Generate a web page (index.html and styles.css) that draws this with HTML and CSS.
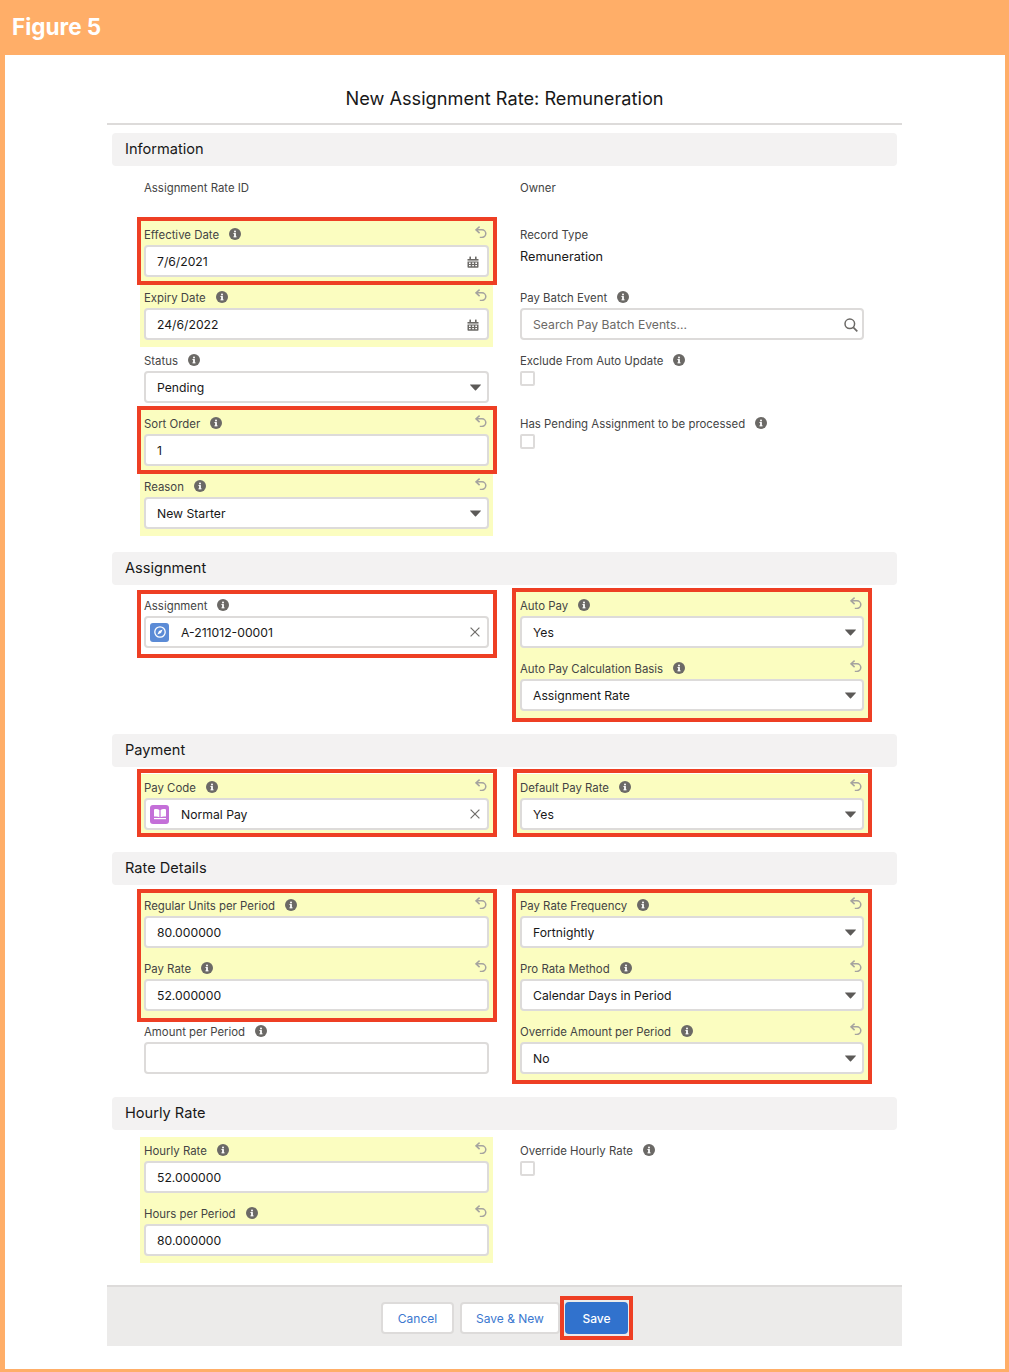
FILE: index.html
```html
<!DOCTYPE html>
<html lang="en">
<head>
<meta charset="utf-8">
<title>Figure 5</title>
<link rel="stylesheet" href="styles.css">
</head>
<body>
<svg class="defs" width="0" height="0" aria-hidden="true">
  <symbol id="info" viewBox="0 0 12 12"><circle cx="6" cy="6" r="6" fill="#6b6966"/><rect x="5.1" y="5.2" width="1.8" height="3.9" fill="#fff"/><rect x="4.4" y="5.1" width="2" height="0.9" fill="#fff"/><rect x="4.4" y="8.4" width="3.2" height="0.9" fill="#fff"/><circle cx="6" cy="3.6" r="1" fill="#fff"/></symbol>
  <symbol id="undo" viewBox="0 0 12 12"><path d="M4.6 0.6 1 3.8l3.6 3.3M1.4 3.8H7a3.8 3.8 0 0 1 0 7.6H4.8" fill="none" stroke="#a5a39f" stroke-width="1.5"/></symbol>
  <symbol id="cal" viewBox="0 0 12 12"><path d="M0.5 3h11v1.6H0.5z" fill="#6b6966"/><rect x="2.4" y="0.6" width="1.6" height="2.4" fill="#6b6966"/><rect x="8" y="0.6" width="1.6" height="2.4" fill="#6b6966"/><path fill-rule="evenodd" d="M0.5 5.4h11V11a.8.8 0 0 1-.8.8H1.3A.8.8 0 0 1 .5 11zM2 6.6v1.3h1.7V6.6zm3.2 0v1.3h1.7V6.6zm3.1 0v1.3H10V6.6zM2 9v1.3h1.7V9zm3.2 0v1.3h1.7V9zm3.1 0v1.3H10V9z" fill="#6b6966"/></symbol>
  <symbol id="search" viewBox="0 0 14 14"><circle cx="5.8" cy="5.8" r="4.8" fill="none" stroke="#6b6966" stroke-width="1.5"/><path d="M9.3 9.3 13.3 13.3" stroke="#6b6966" stroke-width="1.7"/></symbol>
  <symbol id="close" viewBox="0 0 10 10"><path d="M.6.6l8.8 8.8M9.4.6.6 9.4" stroke="#706e6b" stroke-width="1.2" fill="none"/></symbol>
  <symbol id="caret" viewBox="0 0 11 7"><path d="M.3.5h10.4a.3.3 0 0 1 .2.5L5.8 6.4a.4.4 0 0 1-.6 0L.1 1A.3.3 0 0 1 .3.5z" fill="#5c5a58"/></symbol>
</svg>
<div class="frame">
  <header class="banner">Figure 5</header>
  <main class="form">
    <h1 class="title">New Assignment Rate: Remuneration</h1>

    <h2 class="sec first">Information</h2>
    <div class="cols">
      <div class="col">
        <div class="field ro"><div class="lab"><span>Assignment Rate ID</span></div></div>
        <div class="red r-eff">
          <div class="field y">
            <div class="lab"><span>Effective Date</span><svg class="i"><use href="#info"/></svg><svg class="u"><use href="#undo"/></svg></div>
            <div class="inp"><span class="val">7/6/2021</span><svg class="cal"><use href="#cal"/></svg></div>
          </div>
        </div>
        <div class="field y">
          <div class="lab"><span>Expiry Date</span><svg class="i"><use href="#info"/></svg><svg class="u"><use href="#undo"/></svg></div>
          <div class="inp"><span class="val">24/6/2022</span><svg class="cal"><use href="#cal"/></svg></div>
        </div>
        <div class="field">
          <div class="lab"><span>Status</span><svg class="i"><use href="#info"/></svg></div>
          <div class="inp"><span class="val">Pending</span><svg class="car"><use href="#caret"/></svg></div>
        </div>
        <div class="red r-eff">
          <div class="field y">
            <div class="lab"><span>Sort Order</span><svg class="i"><use href="#info"/></svg><svg class="u"><use href="#undo"/></svg></div>
            <div class="inp"><span class="val">1</span></div>
          </div>
        </div>
        <div class="field y">
          <div class="lab"><span>Reason</span><svg class="i"><use href="#info"/></svg><svg class="u"><use href="#undo"/></svg></div>
          <div class="inp"><span class="val">New Starter</span><svg class="car"><use href="#caret"/></svg></div>
        </div>
      </div>
      <div class="col">
        <div class="field ro"><div class="lab"><span>Owner</span></div></div>
        <div class="field">
          <div class="lab"><span>Record Type</span></div>
          <div class="static">Remuneration</div>
        </div>
        <div class="field">
          <div class="lab"><span>Pay Batch Event</span><svg class="i"><use href="#info"/></svg></div>
          <div class="inp"><span class="val ph">Search Pay Batch Events...</span><svg class="srch"><use href="#search"/></svg></div>
        </div>
        <div class="field">
          <div class="lab"><span>Exclude From Auto Update</span><svg class="i"><use href="#info"/></svg></div>
          <div class="chk"></div>
        </div>
        <div class="field">
          <div class="lab"><span>Has Pending Assignment to be processed</span><svg class="i"><use href="#info"/></svg></div>
          <div class="chk"></div>
        </div>
      </div>
    </div>

    <h2 class="sec">Assignment</h2>
    <div class="cols">
      <div class="col">
        <div class="red r-asg">
          <div class="field">
            <div class="lab"><span>Assignment</span><svg class="i"><use href="#info"/></svg></div>
            <div class="inp">
              <span class="tile blue"><svg class="tile-ic" viewBox="0 0 14 14"><circle cx="7" cy="7" r="5.2" fill="none" stroke="#fff" stroke-width="1.3"/><path d="M9.6 4.4 8 8 4.4 9.6 6 6z" fill="#fff"/></svg></span>
              <span class="val pick">A-211012-00001</span><svg class="x"><use href="#close"/></svg>
            </div>
          </div>
        </div>
      </div>
      <div class="col">
        <div class="red r-box">
          <div class="field y">
            <div class="lab"><span>Auto Pay</span><svg class="i"><use href="#info"/></svg><svg class="u"><use href="#undo"/></svg></div>
            <div class="inp"><span class="val">Yes</span><svg class="car"><use href="#caret"/></svg></div>
          </div>
          <div class="field y">
            <div class="lab"><span>Auto Pay Calculation Basis</span><svg class="i"><use href="#info"/></svg><svg class="u"><use href="#undo"/></svg></div>
            <div class="inp"><span class="val">Assignment Rate</span><svg class="car"><use href="#caret"/></svg></div>
          </div>
        </div>
      </div>
    </div>

    <h2 class="sec">Payment</h2>
    <div class="cols">
      <div class="col">
        <div class="red r-pay">
          <div class="field y">
            <div class="lab"><span>Pay Code</span><svg class="i"><use href="#info"/></svg><svg class="u"><use href="#undo"/></svg></div>
            <div class="inp">
              <span class="tile violet"><svg class="tile-ic" viewBox="0 0 14 14"><path d="M1 2.4c2-.5 4.2-.4 5.4.6v7.2c-1.2-.8-3.4-1-5.4-.6zM13 2.4c-2-.5-4.2-.4-5.4.6v7.2c1.2-.8 3.4-1 5.4-.6z" fill="#fff"/><rect x="1" y="11" width="12" height="1.2" fill="#fff"/></svg></span>
              <span class="val pick">Normal Pay</span><svg class="x"><use href="#close"/></svg>
            </div>
          </div>
        </div>
      </div>
      <div class="col">
        <div class="red r-pay">
          <div class="field y">
            <div class="lab"><span>Default Pay Rate</span><svg class="i"><use href="#info"/></svg><svg class="u"><use href="#undo"/></svg></div>
            <div class="inp"><span class="val">Yes</span><svg class="car"><use href="#caret"/></svg></div>
          </div>
        </div>
      </div>
    </div>

    <h2 class="sec tight">Rate Details</h2>
    <div class="cols">
      <div class="col">
        <div class="red r-rate">
          <div class="field y">
            <div class="lab"><span>Regular Units per Period</span><svg class="i"><use href="#info"/></svg><svg class="u"><use href="#undo"/></svg></div>
            <div class="inp"><span class="val">80.000000</span></div>
          </div>
          <div class="field y">
            <div class="lab"><span>Pay Rate</span><svg class="i"><use href="#info"/></svg><svg class="u"><use href="#undo"/></svg></div>
            <div class="inp"><span class="val">52.000000</span></div>
          </div>
        </div>
        <div class="field">
          <div class="lab"><span>Amount per Period</span><svg class="i"><use href="#info"/></svg></div>
          <div class="inp"></div>
        </div>
      </div>
      <div class="col">
        <div class="red r-freq">
          <div class="field y">
            <div class="lab"><span>Pay Rate Frequency</span><svg class="i"><use href="#info"/></svg><svg class="u"><use href="#undo"/></svg></div>
            <div class="inp"><span class="val">Fortnightly</span><svg class="car"><use href="#caret"/></svg></div>
          </div>
          <div class="field y">
            <div class="lab"><span>Pro Rata Method</span><svg class="i"><use href="#info"/></svg><svg class="u"><use href="#undo"/></svg></div>
            <div class="inp"><span class="val">Calendar Days in Period</span><svg class="car"><use href="#caret"/></svg></div>
          </div>
          <div class="field y">
            <div class="lab"><span>Override Amount per Period</span><svg class="i"><use href="#info"/></svg><svg class="u"><use href="#undo"/></svg></div>
            <div class="inp"><span class="val">No</span><svg class="car"><use href="#caret"/></svg></div>
          </div>
        </div>
      </div>
    </div>

    <h2 class="sec">Hourly Rate</h2>
    <div class="cols">
      <div class="col">
        <div class="field y">
          <div class="lab"><span>Hourly Rate</span><svg class="i"><use href="#info"/></svg><svg class="u"><use href="#undo"/></svg></div>
          <div class="inp"><span class="val">52.000000</span></div>
        </div>
        <div class="field y">
          <div class="lab"><span>Hours per Period</span><svg class="i"><use href="#info"/></svg><svg class="u"><use href="#undo"/></svg></div>
          <div class="inp"><span class="val">80.000000</span></div>
        </div>
      </div>
      <div class="col">
        <div class="field">
          <div class="lab"><span>Override Hourly Rate</span><svg class="i"><use href="#info"/></svg></div>
          <div class="chk"></div>
        </div>
      </div>
    </div>

    <footer class="foot">
      <button class="btn b-cancel" type="button">Cancel</button>
      <button class="btn b-new" type="button">Save &amp; New</button>
      <div class="red r-save"><button class="btn b-save" type="button">Save</button></div>
    </footer>
  </main>
</div>
</body>
</html>
```

FILE: styles.css
```css
* { box-sizing: border-box; }
html, body { margin: 0; padding: 0; background: #fff; }
.defs { position: absolute; }
.frame {
  width: 1009px;
  height: 1372px;
  border-left: 5px solid #ffae68;
  border-right: 4px solid #ffae68;
  border-bottom: 3px solid #ffae68;
  font-family: Inter, "Liberation Sans", sans-serif;
  color: #181818;
  overflow: hidden;
}
.banner {
  height: 55px;
  margin: 0 -4px 0 -5px;
  padding-left: 12px;
  background: #ffae68;
  color: #fff;
  font-size: 22.5px;
  font-weight: 700;
  line-height: 54px;
}
.form { width: 795px; margin-left: 102px; }
.title {
  height: 70px;
  margin: 0;
  padding-top: 30px;
  border-bottom: 2px solid #dddbda;
  font-size: 18.2px;
  font-weight: 400;
  line-height: 26px;
  text-align: center;
}
.sec {
  height: 33px;
  margin: 16px 5px 7px;
  padding-left: 13px;
  background: #f3f2f2;
  border-radius: 4px;
  font-size: 14.6px;
  font-weight: 400;
  line-height: 32px;
}
.sec.first { margin-top: 8px; margin-bottom: 8px; }
.sec.tight { margin-top: 15px; }
.cols {
  display: grid;
  grid-template-columns: 353px 352px;
  column-gap: 23px;
  margin-left: 33px;
}
.col { display: flex; flex-direction: column; }
.field { height: 63px; padding: 4px 4px 0; }
.field.ro { height: 47px; }
.field.y { background: #fbfdc0; }
.lab {
  display: flex;
  align-items: center;
  height: 18px;
  color: #444;
  font-size: 11.4px;
  line-height: 18px;
}
.lab span { margin-top: 2px; }
.i { width: 12px; height: 12px; margin-left: 10px; flex: none; }
.u { width: 12px; height: 12px; margin: -4px 2px 0 auto; flex: none; }
.inp {
  display: flex;
  align-items: center;
  height: 32px;
  margin-top: 2px;
  padding: 0 4px 0 11px;
  background: #fff;
  border: 2px solid #dddbda;
  border-radius: 4px;
  font-size: 12.2px;
  color: #181818;
}
.val { flex: 1; }
.val.ph { color: #6b6966; }
.val.pick { margin-left: 12px; }
.cal { width: 12px; height: 12px; margin: 2px 4px 0 0; }
.car { width: 11px; height: 7px; margin-right: 2px; }
.srch { width: 14px; height: 14px; margin: 1px 0 0 0; }
.x { width: 10px; height: 10px; margin-right: 3px; }
.tile {
  display: flex;
  align-items: center;
  justify-content: center;
  width: 19px;
  height: 19px;
  margin-left: -7px;
  border-radius: 3px;
}
.tile.blue { background: #5b8bd6; }
.tile.violet { background: #c46fd8; }
.tile-ic { width: 14px; height: 14px; }
.static { margin-top: 5px; font-size: 12.7px; line-height: 18px; }
.chk {
  width: 15px;
  height: 15px;
  margin-top: 2px;
  background: #fff;
  border: 2px solid #dddbda;
  border-radius: 2px;
}
.red { position: relative; }
.red::after {
  content: "";
  position: absolute;
  border: 4px solid #ee3f24;
  pointer-events: none;
}
.r-eff::after { inset: -4px -4px -1px -3px; }
.r-asg::after { inset: -2px -4px -3px -3px; }
.r-box::after { inset: -4px -4px -4px -4px; }
.r-pay::after { inset: -5px -4px 0 -3px; }
.r-rate::after { inset: -3px -4px -4px -3px; }
.r-freq::after { inset: -3px -4px -3px -4px; }
.r-save::after { inset: -6px -5px -6px -5px; }
.foot {
  display: flex;
  justify-content: center;
  align-items: flex-start;
  gap: 6px;
  height: 61px;
  margin-top: 22px;
  padding-top: 15px;
  background: #ecebea;
  border-top: 2px solid #dddbda;
}
.btn {
  height: 32px;
  padding: 0;
  background: #fff;
  border: 2px solid #dddbda;
  border-radius: 4px;
  color: #3b78cf;
  font-family: inherit;
  font-size: 12px;
}
.b-cancel { width: 73px; }
.b-new { width: 100px; }
.r-save { margin-left: -1px; }
.b-save { display: block; width: 63px; background: #3172cd; border-color: #3172cd; color: #fff; font-weight: 500; }
```
